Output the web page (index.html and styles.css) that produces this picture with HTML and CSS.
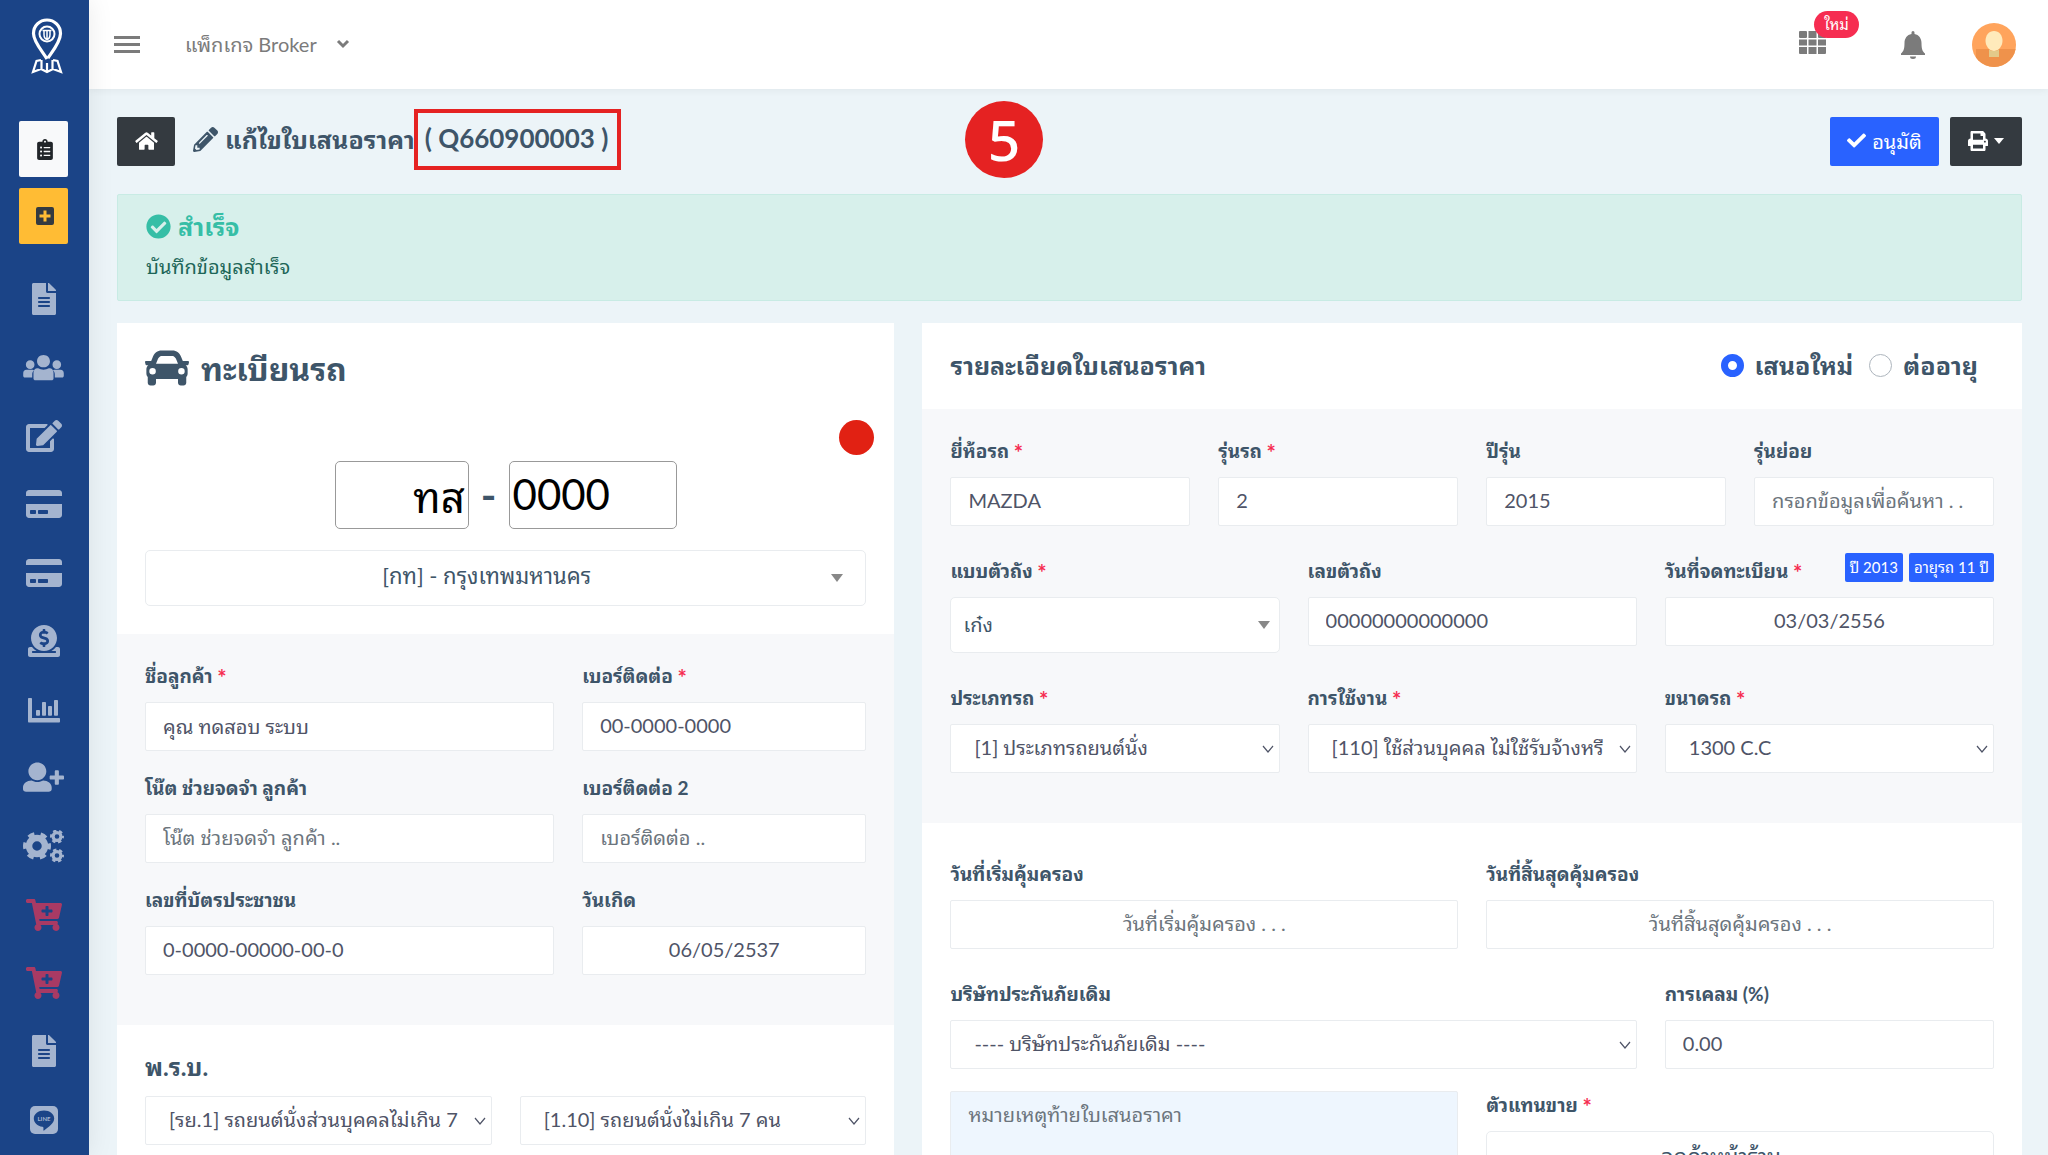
FILE: index.html
```html
<!DOCTYPE html>
<html lang="th">
<head>
<meta charset="utf-8">
<meta name="viewport" content="width=device-width, initial-scale=1">
<title>แก้ไขใบเสนอราคา</title>
<link rel="stylesheet" href="styles.css">
</head>
<body>
<svg class="defs" aria-hidden="true">
  <symbol id="i-file" viewBox="0 0 384 512"><path d="M224 136V0H24C10.7 0 0 10.7 0 24v464c0 13.3 10.7 24 24 24h336c13.3 0 24-10.7 24-24V160H248c-13.2 0-24-10.8-24-24zm64 236c0 6.6-5.4 12-12 12H108c-6.6 0-12-5.4-12-12v-8c0-6.6 5.4-12 12-12h168c6.6 0 12 5.4 12 12v8zm0-64c0 6.6-5.4 12-12 12H108c-6.6 0-12-5.4-12-12v-8c0-6.6 5.4-12 12-12h168c6.6 0 12 5.4 12 12v8zm0-72v8c0 6.6-5.4 12-12 12H108c-6.6 0-12-5.4-12-12v-8c0-6.6 5.4-12 12-12h168c6.6 0 12 5.4 12 12zm96-114.1v6.1H256V0h6.1c6.4 0 12.5 2.5 17 7l97.9 98c4.5 4.5 7 10.6 7 16.9z"/></symbol>
  <symbol id="i-card" viewBox="0 0 576 512"><path d="M0 432c0 26.500 21.500 48 48 48h480c26.500 0 48-21.500 48-48V256H0v176zm192-68c0-6.600 5.400-12 12-12h136c6.600 0 12 5.400 12 12v40c0 6.600-5.400 12-12 12H204c-6.600 0-12-5.400-12-12v-40zm-128 0c0-6.600 5.400-12 12-12h72c6.600 0 12 5.400 12 12v40c0 6.600-5.400 12-12 12H76c-6.600 0-12-5.400-12-12v-40zM576 80v48H0V80c0-26.500 21.500-48 48-48h480c26.500 0 48 21.500 48 48z"/></symbol>
  <symbol id="i-cart" viewBox="0 0 576 512"><path d="M504.717 320H211.572l6.545 32h268.418c15.401 0 26.816 14.301 23.403 29.319l-5.517 24.276C523.112 414.668 536 433.828 536 456c0 31.202-25.519 56.444-56.824 55.994-29.823-.429-54.35-24.631-55.155-54.447-.44-16.287 6.085-31.049 16.803-41.548H231.176C241.553 426.165 248 440.326 248 456c0 31.813-26.528 57.431-58.67 55.938-28.54-1.325-51.751-24.385-53.251-52.917-1.158-22.034 10.436-41.455 28.051-51.586L93.883 64H24C10.745 64 0 53.255 0 40V24C0 10.745 10.745 0 24 0h102.529c11.401 0 21.228 8.021 23.513 19.19L159.208 64H551.99c15.401 0 26.816 14.301 23.403 29.319l-47.273 208C525.637 312.246 515.923 320 504.717 320zM408 168h-48v-40c0-8.837-7.163-16-16-16h-16c-8.837 0-16 7.163-16 16v40h-48c-8.837 0-16 7.163-16 16v16c0 8.837 7.163 16 16 16h48v40c0 8.837 7.163 16 16 16h16c8.837 0 16-7.163 16-16v-40h48c8.837 0 16-7.163 16-16v-16c0-8.837-7.163-16-16-16z"/></symbol>
</svg>

<div class="app">
  <aside class="side">
    <a class="logo" href="#" aria-label="หน้าแรก">
      <svg width="32" height="56" viewBox="0 0 32 56" fill="none" stroke="#fff">
        <path stroke-width="3.200" d="M16 41C12 34 2.500 24 2.500 15.500a13.500 13.500 0 0 1 27 0C29.500 24 21 34 17 40"/>
        <circle cx="16" cy="16" r="7.500" stroke-width="2"/>
        <path stroke-width="1.500" d="M11.500 12.500h9M13 12.500v4q0 4 3 5q3-1 3-5v-4M16 13v8"/>
        <path stroke-width="2.200" d="M10 42l-4.500 1L2 54l8-3 6 3 6-3 8 3-3.500-11-4.500-1M10.500 42v9M21.500 42v9M16 45v9"/>
      </svg>
    </a>
    <div class="quick">
      <button class="quick-btn quick-light" type="button" aria-label="รายการ">
        <svg width="16" height="21" viewBox="0 0 384 512"><path d="M336 64h-80c0-35.300-28.700-64-64-64s-64 28.700-64 64H48C21.500 64 0 85.500 0 112v352c0 26.500 21.500 48 48 48h288c26.500 0 48-21.500 48-48V112c0-26.500-21.500-48-48-48zM96 424c-13.300 0-24-10.700-24-24s10.700-24 24-24 24 10.700 24 24-10.700 24-24 24zm0-96c-13.300 0-24-10.700-24-24s10.700-24 24-24 24 10.700 24 24-10.700 24-24 24zm0-96c-13.300 0-24-10.700-24-24s10.700-24 24-24 24 10.700 24 24-10.700 24-24 24zm96-192c13.300 0 24 10.700 24 24s-10.700 24-24 24-24-10.700-24-24 10.700-24 24-24zm128 368c0 4.400-3.600 8-8 8H168c-4.400 0-8-3.600-8-8v-16c0-4.400 3.600-8 8-8h144c4.400 0 8 3.600 8 8v16zm0-96c0 4.400-3.600 8-8 8H168c-4.400 0-8-3.600-8-8v-16c0-4.400 3.600-8 8-8h144c4.400 0 8 3.600 8 8v16zm0-96c0 4.400-3.600 8-8 8H168c-4.400 0-8-3.600-8-8v-16c0-4.400 3.600-8 8-8h144c4.400 0 8 3.600 8 8v16z"/></svg>
      </button>
      <button class="quick-btn quick-amber" type="button" aria-label="เพิ่ม">
        <svg width="18" height="18" viewBox="0 0 18 18"><path fill-rule="evenodd" d="M2 0h14a2 2 0 0 1 2 2v14a2 2 0 0 1-2 2H2a2 2 0 0 1-2-2V2a2 2 0 0 1 2-2zM7.500 3.500v4h-4v3h4v4h3v-4h4v-3h-4v-4z"/></svg>
      </button>
    </div>
    <nav class="menu">
      <a href="#" aria-label="ใบเสนอราคา"><svg width="24" height="32"><use href="#i-file"/></svg></a>
      <a href="#" aria-label="ลูกค้า"><svg width="41" height="26" viewBox="0 0 640 410"><path d="M110 220c38 0 68-30 68-68s-30-68-68-68-68 30-68 68 30 68 68 68zm420 0c38 0 68-30 68-68s-30-68-68-68-68 30-68 68 30 68 68 68zm-210-25c61.900 0 102-45 102-97S382 0 320 0 218 46 218 98s40 97 102 97zM50 234C20 234 0 258 0 288v42c0 14 12 24 24 24h118v-50c0-26 12-46 30-62-8-5-16-8-24-8zm540 0c30 0 50 24 50 54v42c0 14-12 24-24 24H498v-50c0-26-12-46-30-62 8-5 16-8 24-8zM236 210h-12c-36 0-62 32-62 70v90c0 17 13 30 30 30h256c17 0 30-13 30-30v-90c0-38-26-70-62-70h-12c-24 14-52 22-84 22s-60-8-84-22z"/></svg></a>
      <a href="#" aria-label="แก้ไข"><svg width="36" height="32" viewBox="0 0 576 512"><path d="M402.600 83.200l90.200 90.200c3.800 3.800 3.800 10 0 13.800L274.400 405.600l-92.800 10.300c-12.400 1.400-22.900-9.100-21.500-21.500l10.300-92.800L388.800 83.200c3.800-3.800 10-3.800 13.800 0zm162-22.900l-48.800-48.800c-15.200-15.200-39.900-15.200-55.200 0l-35.400 35.400c-3.800 3.800-3.800 10 0 13.800l90.200 90.200c3.800 3.800 10 3.800 13.800 0l35.400-35.400c15.200-15.300 15.200-40 0-55.200zM384 346.200V448H64V128h229.800c3.200 0 6.200-1.300 8.500-3.500l40-40c7.600-7.600 2.200-20.500-8.500-20.500H48C21.500 64 0 85.500 0 112v352c0 26.500 21.500 48 48 48h352c26.500 0 48-21.500 48-48V306.200c0-10.700-12.900-16-20.500-8.500l-40 40c-2.200 2.300-3.500 5.300-3.500 8.500z"/></svg></a>
      <a href="#" aria-label="ชำระเงิน"><svg width="36" height="32"><use href="#i-card"/></svg></a>
      <a href="#" aria-label="บัตร"><svg width="36" height="32"><use href="#i-card"/></svg></a>
      <a href="#" aria-label="การเงิน"><svg width="32" height="32" viewBox="0 0 512 512"><path d="M256 416c114.900 0 208-93.100 208-208S370.900 0 256 0 48 93.100 48 208s93.100 208 208 208zM233.800 97.400V80.600c0-9.200 7.400-16.600 16.600-16.600h11.100c9.200 0 16.600 7.400 16.600 16.600v17c15.500.8 30.500 6.100 43 15.400 5.600 4.100 6.200 12.300 1.200 17.100L306 145.600c-3.800 3.700-9.500 3.800-14 1-5.400-3.400-11.400-5.100-17.800-5.100h-38.900c-9 0-16.300 8.200-16.300 18.300 0 8.200 5 15.500 12.100 17.600l62.300 18.700c25.700 7.700 43.700 32.400 43.700 60.100 0 34-26.400 61.500-59.100 62.400v16.800c0 9.200-7.400 16.600-16.600 16.600h-11.100c-9.200 0-16.600-7.400-16.600-16.600v-17c-15.500-.8-30.500-6.100-43-15.400-5.600-4.100-6.200-12.300-1.200-17.100l16.300-15.500c3.800-3.700 9.500-3.800 14-1 5.400 3.400 11.400 5.100 17.800 5.100h38.900c9 0 16.300-8.200 16.300-18.300 0-8.200-5-15.500-12.100-17.600l-62.300-18.700c-25.700-7.700-43.700-32.400-43.700-60.100.1-34 26.400-61.500 59.100-62.400zM480 352h-32.500c-19.600 26-44.600 47.700-73 64h63.800c5.300 0 9.600 3.600 9.600 8v16c0 4.400-4.300 8-9.600 8H73.600c-5.300 0-9.600-3.600-9.600-8v-16c0-4.400 4.300-8 9.600-8h63.800c-28.400-16.300-53.300-38-73-64H32c-17.700 0-32 14.300-32 32v96c0 17.700 14.300 32 32 32h448c17.700 0 32-14.300 32-32v-96c0-17.700-14.300-32-32-32z"/></svg></a>
      <a href="#" aria-label="รายงาน"><svg width="32" height="32" viewBox="0 0 512 512"><path d="M332.800 348h38.400c6.400 0 12.800-6.400 12.800-12.800V204.800c0-6.400-6.400-12.800-12.800-12.800h-38.400c-6.400 0-12.800 6.400-12.800 12.800v130.400c0 6.400 6.400 12.800 12.800 12.800zm96 0h38.400c6.400 0 12.800-6.400 12.800-12.800V108.800c0-6.400-6.400-12.800-12.800-12.800h-38.400c-6.400 0-12.800 6.400-12.800 12.800v226.400c0 6.400 6.400 12.800 12.800 12.800zm-288 0h38.400c6.400 0 12.800-6.400 12.800-12.800v-66.400c0-6.400-6.400-12.800-12.800-12.800h-38.400c-6.400 0-12.800 6.400-12.800 12.800v66.400c0 6.400 6.400 12.800 12.800 12.800zm96 0h38.400c6.400 0 12.800-6.400 12.800-12.800V140.800c0-6.400-6.400-12.800-12.800-12.800h-38.400c-6.400 0-12.800 6.400-12.800 12.800v194.400c0 6.400 6.400 12.800 12.800 12.800zM496 384H64V80c0-8.800-7.200-16-16-16H16C7.200 64 0 71.200 0 80v356c0 12 6 20 18 20h478c8.800 0 16-7.200 16-16v-40c0-8.800-7.200-16-16-16z"/></svg></a>
      <a href="#" aria-label="เพิ่มผู้ใช้"><svg width="41" height="33" viewBox="0 0 640 512"><path d="M624 224h-64v-64c0-8.800-7.200-16-16-16h-32c-8.800 0-16 7.200-16 16v64h-64c-8.800 0-16 7.200-16 16v32c0 8.800 7.200 16 16 16h64v64c0 8.800 7.200 16 16 16h32c8.800 0 16-7.200 16-16v-64h64c8.800 0 16-7.200 16-16v-32c0-8.800-7.200-16-16-16zM224 298c78 0 140-57.300 140-138S302 20 224 20 84 80 84 160s62 138 140 138zm89.600 6c-22 14-55 24-89.600 24s-67-10-89.600-24C60 304 0 350 0 412V440c0 20 21.500 38 48 38h352c26.500 0 48-18 48-38v-28c0-62-60-108-134.400-108z"/></svg></a>
      <a href="#" aria-label="ตั้งค่า">
        <svg width="41" height="33" viewBox="0 0 41 33" fill="none" stroke="currentColor">
          <circle cx="14" cy="16" r="8" stroke-width="6.500"/><circle cx="14" cy="16" r="12" stroke-width="4" stroke-dasharray="6.280 6.280" stroke-dashoffset="3"/>
          <circle cx="34" cy="6.500" r="3.900" stroke-width="3.200"/><circle cx="34" cy="6.500" r="5.800" stroke-width="2.400" stroke-dasharray="3.300 2.774" stroke-dashoffset="1.600"/>
          <circle cx="34" cy="25.500" r="3.900" stroke-width="3.200"/><circle cx="34" cy="25.500" r="5.800" stroke-width="2.400" stroke-dasharray="3.300 2.774" stroke-dashoffset="1.600"/>
        </svg>
      </a>
      <a class="hot" href="#" aria-label="สั่งซื้อ"><svg width="36" height="32"><use href="#i-cart"/></svg></a>
      <a class="hot" href="#" aria-label="ตะกร้า"><svg width="36" height="32"><use href="#i-cart"/></svg></a>
      <a href="#" aria-label="เอกสาร"><svg width="24" height="32"><use href="#i-file"/></svg></a>
      <a href="#" aria-label="LINE"><svg width="28" height="28" viewBox="0 0 28 28"><rect width="28" height="28" rx="5"/><path fill="#1b4487" d="M14 4.500c5.600 0 10.200 3.500 10.200 8 0 4.800-6 8.600-9.800 11.700-1 .8-1.200.2-1-.8.200-1.600.1-2.400-1-2.600C7.500 20.200 3.800 16.800 3.800 12.500c0-4.500 4.600-8 10.200-8z"/><text x="14" y="15" text-anchor="middle" font-size="6" font-weight="700" font-family="Lato, sans-serif">LINE</text></svg></a>
    </nav>
  </aside>

  <div class="page">
    <header class="top">
      <button class="burger" type="button" aria-label="เมนู"><span></span><span></span><span></span></button>
      <button class="pack" type="button">แพ็กเกจ Broker
        <svg width="14" height="10" viewBox="0 0 14 10" fill="none" stroke="currentColor" stroke-width="3"><path d="M2 2l5 5 5-5"/></svg>
      </button>
      <div class="top-right">
        <button class="apps" type="button" aria-label="แอป">
          <svg width="27" height="24" viewBox="0 0 27 24"><path d="M1 0h6a1 1 0 0 1 1 1v5a1 1 0 0 1-1 1H1a1 1 0 0 1-1-1V1a1 1 0 0 1 1-1zM9.500 0h8v7h-8zM20 0h6a1 1 0 0 1 1 1v5a1 1 0 0 1-1 1h-6a1 1 0 0 1-1-1V1a1 1 0 0 1 1-1zM0 8.500h8v6H0zM9.500 8.500h8v6h-8zM19 8.500h8v6h-8zM0 16h8v7H1a1 1 0 0 1-1-1zM9.500 16h8v7h-8zM19 16h8v6a1 1 0 0 1-1 1h-7z"/></svg>
          <span class="new">ใหม่</span>
        </button>
        <button class="bell" type="button" aria-label="แจ้งเตือน">
          <svg width="24" height="28" viewBox="0 0 24 28"><path d="M12 0a1.500 1.500 0 0 1 1.500 1.500V3c4.500.8 7 4.500 7 9 0 6 1 8.500 3.500 10.500V24H0v-1.500C2.500 20.500 3.500 18 3.500 12c0-4.500 2.500-8.200 7-9V1.500A1.500 1.500 0 0 1 12 0zM9 25.500h6a3 2.500 0 0 1-6 0z"/></svg>
        </button>
        <a class="avatar" href="#" aria-label="บัญชี">
          <svg width="44" height="44" viewBox="0 0 44 44"><clipPath id="av"><circle cx="22" cy="22" r="22"/></clipPath><g clip-path="url(#av)"><path fill="#ffa45c" d="M0 0h44v44H0z"/><path fill="#ef924b" d="M4 26h40v18H4z"/><path fill="#ffeabb" d="M22 8c5 0 8.500 4 8.500 10 0 5-4 10-8.500 10s-8.500-5-8.500-10C13.500 12 17 8 22 8z"/><path fill="#e3c98a" d="M17 26.500q5 3 10 0V34H17z"/></g></svg>
        </a>
      </div>
    </header>

    <main class="body">
      <div class="head">
        <a class="btn dark home" href="#" aria-label="หน้าแรก"><svg width="23" height="20" viewBox="0 0 576 512"><path d="M280.370 148.260L96 300.110V464a16 16 0 0 0 16 16l112.060-.29a16 16 0 0 0 15.920-16V368a16 16 0 0 1 16-16h64a16 16 0 0 1 16 16v95.640a16 16 0 0 0 16 16.050L464 480a16 16 0 0 0 16-16V300L295.670 148.260a12.190 12.190 0 0 0-15.300 0zM571.600 251.470L488 182.560V44.050a12 12 0 0 0-12-12h-56a12 12 0 0 0-12 12v72.610L318.470 43a48 48 0 0 0-61 0L4.340 251.470a12 12 0 0 0-1.600 16.900l25.500 31A12 12 0 0 0 45.150 301l235.220-193.740a12.190 12.190 0 0 1 15.300 0L530.900 301a12 12 0 0 0 16.900-1.600l25.500-31a12 12 0 0 0-1.700-16.930z"/></svg></a>
        <h1 class="title">
          <svg width="25" height="25" viewBox="0 0 512 512"><path d="M497.900 142.100l-46.100 46.100c-4.700 4.700-12.300 4.700-17 0l-111-111c-4.700-4.700-4.700-12.300 0-17l46.100-46.100c18.700-18.700 49.100-18.700 67.900 0l60.100 60.100c18.800 18.700 18.800 49.100 0 67.900zM284.200 99.800L21.600 362.400.4 483.900c-2.900 16.400 11.400 30.600 27.800 27.800l121.500-21.300 262.600-262.600c4.700-4.700 4.700-12.300 0-17l-111-111c-4.800-4.700-12.400-4.700-17.100 0zM124.100 339.900c-5.500-5.500-5.500-14.300 0-19.800l154-154c5.500-5.500 14.300-5.500 19.800 0s5.500 14.300 0 19.800l-154 154c-5.500 5.500-14.300 5.500-19.800 0zM88 424h48v36.300l-64.500 11.300-31.100-31.100L51.700 376H88v48z"/></svg>
          <span class="title-text">แก้ไขใบเสนอราคา</span><span class="code">( Q660900003 )</span>
        </h1>
        <span class="step">5</span>
        <div class="actions">
          <button class="btn blue" type="button"><svg width="19" height="19" viewBox="0 0 512 512"><path d="M173.898 439.404l-166.400-166.400c-9.997-9.997-9.997-26.206 0-36.204l36.203-36.204c9.997-9.998 26.207-9.998 36.204 0L192 312.690 432.095 72.596c9.997-9.997 26.207-9.997 36.204 0l36.203 36.204c9.997 9.997 9.997 26.206 0 36.204l-294.400 294.401c-9.998 9.997-26.207 9.997-36.204-.001z"/></svg>อนุมัติ</button>
          <button class="btn dark print" type="button" aria-label="พิมพ์"><svg width="20" height="20" viewBox="0 0 512 512"><path d="M448 192V77.250c0-8.490-3.370-16.620-9.370-22.630L393.370 9.370c-6-6-14.140-9.370-22.630-9.370H96C78.330 0 64 14.330 64 32v160c-35.350 0-64 28.650-64 64v112c0 8.840 7.160 16 16 16h48v96c0 17.670 14.330 32 32 32h320c17.670 0 32-14.330 32-32v-96h48c8.840 0 16-7.160 16-16V256c0-35.350-28.650-64-64-64zm-64 256H128v-96h256v96zm0-224H128V64h192v48c0 8.840 7.160 16 16 16h48v96zm48 72c-13.250 0-24-10.750-24-24 0-13.260 10.750-24 24-24s24 10.740 24 24c0 13.250-10.750 24-24 24z"/></svg><svg width="10" height="6" viewBox="0 0 10 6"><path d="M0 0h10L5 6z"/></svg></button>
        </div>
      </div>

      <section class="alert" role="status">
        <h2 class="alert-title"><svg width="25" height="25" viewBox="0 0 512 512"><path d="M504 256c0 136.967-111.033 248-248 248S8 392.967 8 256 119.033 8 256 8s248 111.033 248 248zM227.314 387.314l184-184c6.248-6.248 6.248-16.379 0-22.627l-22.627-22.627c-6.248-6.249-16.379-6.249-22.628 0L216 308.118l-70.059-70.059c-6.248-6.248-16.379-6.248-22.628 0l-22.627 22.627c-6.248 6.248-6.248 16.379 0 22.627l104 104c6.249 6.249 16.379 6.249 22.628.001z"/></svg>สำเร็จ</h2>
        <p class="alert-text">บันทึกข้อมูลสำเร็จ</p>
      </section>

      <form class="cards">
        <section class="card card-l">
          <div class="plate-box">
            <h2 class="car-title"><svg width="44" height="44" viewBox="0 0 512 512"><path fill-rule="evenodd" d="M500 164h-60l-16.500-41.600C406.400 70 365.600 40 319.500 40h-127c-46 0-87 30-104 82.400L72 164H12C4.200 164-1.500 171.300.4 178.900l6 24C7.700 208.300 12.500 212 18 212h20C24.600 223.700 16 240.800 16 260v48c0 16 6 30.700 16 42v66c0 17.700 14.300 32 32 32h32c17.700 0 32-14.300 32-32v-44h256v44c0 17.700 14.300 32 32 32h32c17.700 0 32-14.300 32-32v-66c10-11.300 16-26 16-42v-48c0-19.200-8.600-36.300-22-48h20c5.500 0 10.300-3.700 11.600-9l6-24c2-7.600-3.800-15-11.600-15zM148 146c7-20 25-42 44.500-42h127c19.600 0 37.500 22 44.500 42l20 50H128zM88 244a38 38 0 1 1 0 76 38 38 0 0 1 0-76zm336 0a38 38 0 1 1 0 76 38 38 0 0 1 0-76z"/></svg>ทะเบียนรถ</h2>
            <span class="dot"></span>
            <div class="plate">
              <input class="plate-in plate-a" aria-label="หมวดอักษร" value="ทส">
              <strong>-</strong>
              <input class="plate-in plate-b" aria-label="เลขทะเบียน" value="0000">
            </div>
            <select class="sel2 mid province" aria-label="จังหวัด"><option>[กท] - กรุงเทพมหานคร</option></select>
          </div>
          <div class="shade grid tight">
            <div class="f w7"><label for="nm">ชื่อลูกค้า <i>*</i></label><input id="nm" value="คุณ ทดสอบ ระบบ"></div>
            <div class="f w5"><label for="ph">เบอร์ติดต่อ <i>*</i></label><input id="ph" value="00-0000-0000"></div>
            <div class="f w7"><label for="nt">โน๊ต ช่วยจดจำ ลูกค้า</label><input id="nt" placeholder="โน๊ต ช่วยจดจำ ลูกค้า .."></div>
            <div class="f w5"><label for="ph2">เบอร์ติดต่อ 2</label><input id="ph2" placeholder="เบอร์ติดต่อ .."></div>
            <div class="f w7"><label for="cid">เลขที่บัตรประชาชน</label><input id="cid" value="0-0000-00000-00-0"></div>
            <div class="f w5"><label for="bd">วันเกิด</label><input id="bd" class="mid" value="06/05/2537"></div>
          </div>
          <div class="act">
            <h3>พ.ร.บ.</h3>
            <div class="grid">
              <select class="sel w6" aria-label="ประเภท พ.ร.บ."><option>[รย.1] รถยนต์นั่งส่วนบุคคลไม่เกิน 7</option></select>
              <select class="sel w6" aria-label="รหัส พ.ร.บ."><option>[1.10] รถยนต์นั่งไม่เกิน 7 คน</option></select>
            </div>
          </div>
        </section>

        <section class="card card-r">
          <div class="detail-head">
            <h2>รายละเอียดใบเสนอราคา</h2>
            <div class="radios">
              <label><input type="radio" name="kind" checked>เสนอใหม่</label>
              <label><input type="radio" name="kind">ต่ออายุ</label>
            </div>
          </div>
          <div class="shade grid">
            <div class="f w3"><label for="br">ยี่ห้อรถ <i>*</i></label><input id="br" value="MAZDA"></div>
            <div class="f w3"><label for="md">รุ่นรถ <i>*</i></label><input id="md" value="2"></div>
            <div class="f w3"><label for="yr">ปีรุ่น</label><input id="yr" value="2015"></div>
            <div class="f w3"><label for="sb">รุ่นย่อย</label><input id="sb" placeholder="กรอกข้อมูลเพื่อค้นหา . ."></div>
            <div class="f w4"><label for="bt">แบบตัวถัง <i>*</i></label><select id="bt" class="sel2"><option>เก๋ง</option></select></div>
            <div class="f w4"><label for="vin">เลขตัวถัง</label><input id="vin" value="00000000000000"></div>
            <div class="f w4">
              <div class="lab-row"><label for="rg">วันที่จดทะเบียน <i>*</i></label><span class="tags"><span>ปี 2013</span><span>อายุรถ 11 ปี</span></span></div>
              <input id="rg" class="mid" value="03/03/2556">
            </div>
            <div class="f w4"><label for="tp">ประเภทรถ <i>*</i></label><select id="tp" class="sel"><option>[1] ประเภทรถยนต์นั่ง</option></select></div>
            <div class="f w4"><label for="us">การใช้งาน <i>*</i></label><select id="us" class="sel"><option>[110] ใช้ส่วนบุคคล ไม่ใช้รับจ้างหรือให้เช่า</option></select></div>
            <div class="f w4"><label for="cc">ขนาดรถ <i>*</i></label><select id="cc" class="sel"><option>1300 C.C</option></select></div>
          </div>
          <div class="cover grid">
            <div class="f w6"><label for="st">วันที่เริ่มคุ้มครอง</label><input id="st" class="mid" placeholder="วันที่เริ่มคุ้มครอง . . ."></div>
            <div class="f w6"><label for="en">วันที่สิ้นสุดคุ้มครอง</label><input id="en" class="mid" placeholder="วันที่สิ้นสุดคุ้มครอง . . ."></div>
            <div class="f w8"><label for="co">บริษัทประกันภัยเดิม</label><select id="co" class="sel"><option>---- บริษัทประกันภัยเดิม ----</option></select></div>
            <div class="f w4"><label for="cl">การเคลม (%)</label><input id="cl" value="0.00"></div>
          </div>
          <div class="agent grid">
            <textarea class="w6" rows="4" aria-label="หมายเหตุ" placeholder="หมายเหตุท้ายใบเสนอราคา"></textarea>
            <div class="f w6"><label for="ag">ตัวแทนขาย <i>*</i></label><select id="ag" class="sel2 mid"><option>ลูกค้าหน้าร้าน</option></select></div>
          </div>
        </section>
      </form>
    </main>
  </div>
</div>
</body>
</html>
```
FILE: styles.css
```css
* { box-sizing: border-box; }
body {
  margin: 0;
  height: 100vh;
  overflow: hidden;
  background: #ecf4f8;
  color: #3e5569;
  font: 400 20px/28px Lato, "Noto Sans Thai Looped", "Noto Sans Thai", "Noto Sans", sans-serif;
}
h1, h2, h3, p { margin: 0; font-weight: 700; }
button, input, select, textarea { font: inherit; color: inherit; }
button { border: 0; padding: 0; background: none; cursor: pointer; }
svg { fill: currentColor; flex: none; display: block; }
svg[fill="none"] { fill: none; }
.defs { position: absolute; width: 0; height: 0; }

.app { display: flex; height: 100vh; }

/* sidebar */
.side {
  width: 89px;
  flex: none;
  display: flex;
  flex-direction: column;
  background: #1b4487;
  box-shadow: 1px 0 24px rgba(0, 0, 0, .08);
  z-index: 1;
}
.logo { height: 89px; flex: none; padding: 18px 0 0 31px; }
.quick { display: flex; flex-direction: column; gap: 11px; padding: 32px 0 21px 19px; }
.quick-btn {
  width: 49px;
  height: 56px;
  display: flex;
  align-items: center;
  justify-content: center;
  padding-left: 2px;
  border-radius: 2px;
  color: #212529;
}
.quick-light { background: #f8f9fa; }
.quick-amber { background: #ffbc34; color: #343a40; }
.menu { flex: 1; display: flex; flex-direction: column; padding: 0 2px 1px 0; }
.menu a {
  flex: 1;
  display: flex;
  align-items: center;
  justify-content: center;
  color: #a4b4cf;
}
.menu a.hot { color: #a93a64; }

/* top bar */
.page { flex: 1; min-width: 0; display: flex; flex-direction: column; }
.top {
  height: 89px;
  flex: none;
  display: flex;
  align-items: center;
  padding: 0 32px 0 25px;
  background: #fff;
  color: #7b7b7b;
  box-shadow: 0 1px 8px rgba(0, 0, 0, .06);
}
.burger { display: flex; flex-direction: column; gap: 4px; width: 26px; }
.burger span { height: 3px; background: currentColor; }
.pack { display: flex; align-items: center; gap: 19px; margin-left: 45px; padding-bottom: 2px; }
.top-right { display: flex; align-items: center; margin-left: auto; }
.apps { position: relative; margin-right: 75px; padding-bottom: 3px; }
.bell { margin-right: 47px; }
.new {
  position: absolute;
  left: 15px;
  top: -20px;
  width: 45px;
  height: 27px;
  border-radius: 14px;
  background: #f62d51;
  color: #fff;
  font-size: 15px;
  line-height: 27px;
}

/* page body */
.body { flex: 1; min-height: 0; overflow: hidden; padding: 28px 26px 0 28px; }
.head { position: relative; display: flex; align-items: center; height: 49px; }
.btn {
  display: flex;
  align-items: center;
  justify-content: center;
  gap: 6px;
  height: 49px;
  padding-bottom: 2px;
  border-radius: 2px;
  color: #fff;
}
.dark { background: #343a40; }
.blue { background: #2962ff; width: 109px; }
.home { width: 58px; }
.print { width: 72px; }
.actions { display: flex; gap: 11px; margin-left: auto; }
.title { display: flex; align-items: center; margin-left: 18px; padding-bottom: 4px; font-size: 25px; line-height: 36px; }
.title-text { width: 189px; margin-left: 7px; padding-bottom: 2px; white-space: nowrap; }
.code {
  width: 207px;
  height: 61px;
  padding: 0 2px 3px 0;
  border: 4px solid #e52222;
  display: flex;
  align-items: center;
  justify-content: center;
  font-size: 26px;
  white-space: nowrap;
}
.step {
  position: absolute;
  left: 848px;
  top: -16px;
  width: 78px;
  height: 77px;
  border-radius: 50%;
  background: #e52222;
  color: #fff;
  font: 500 57px/76px "Noto Sans", sans-serif;
  text-align: center;
}
.alert {
  margin-top: 28px;
  height: 107px;
  padding: 11px 28px;
  background: #d7f0eb;
  border: 1px solid #c8ebe4;
  border-radius: 2px;
  color: #1d6658;
}
.alert-title { display: flex; align-items: center; gap: 7px; font-size: 25px; line-height: 40px; color: #36bea6; }
.alert-text { font-weight: 400; line-height: 40px; }

.cards, .grid { display: grid; grid-template-columns: repeat(12, 1fr); column-gap: 28px; align-items: start; }
.cards { margin-top: 22px; }
.card { background: #fff; }
.card-l { grid-column: span 5; }
.card-r { grid-column: span 7; }
.w3 { grid-column: span 3; }
.w4 { grid-column: span 4; }
.w5 { grid-column: span 5; }
.w6 { grid-column: span 6; }
.w7 { grid-column: span 7; }
.w8 { grid-column: span 8; }
.shade { background: #f7f8fa; padding: 24px 28px 50px; row-gap: 27px; }
.tight { row-gap: 19px; }

/* fields */
.f { display: flex; flex-direction: column; min-width: 0; }
.f label { height: 36px; margin-bottom: 8px; line-height: 36px; font-weight: 700; white-space: nowrap; font-size: 19px; }
.f i { color: #f62d51; font-size: 22px; line-height: 20px; font-style: normal; vertical-align: -3px; }
.lab-row { display: flex; justify-content: space-between; }
.tags { display: flex; gap: 6px; }
.tags span {
  height: 29px;
  padding: 0 5px;
  border-radius: 2px;
  background: #2962ff;
  color: #fff;
  font-size: 15px;
  line-height: 29px;
  white-space: nowrap;
}
.f input, .sel, .sel2, textarea {
  width: 100%;
  height: 49px;
  padding: 0 17px 3px;
  border: 1px solid #e9ecef;
  border-radius: 2px;
  background-color: #fff;
  color: #4f5467;
}
.f .mid, .mid { text-align: center; text-align-last: center; }
::placeholder { color: #6c757d; opacity: 1; }
.sel, .sel2 { appearance: none; background-repeat: no-repeat; }
.sel {
  padding: 0 32px 4px 23px;
  background-image: url("data:image/svg+xml,%3Csvg xmlns='http://www.w3.org/2000/svg' width='12' height='8' fill='none' stroke='%234f5467' stroke-width='1.2'%3E%3Cpath d='M1 1l5 6 5-6'/%3E%3C/svg%3E");
  background-position: right 5px center;
}
.sel2, .f .sel2 {
  height: 56px;
  padding: 0 40px 3px 12px;
  border-radius: 5px;
  color: #3e5569;
  background-image: url("data:image/svg+xml,%3Csvg xmlns='http://www.w3.org/2000/svg' width='12' height='8' fill='%23888'%3E%3Cpath d='M0 0h12L6 8z'/%3E%3C/svg%3E");
  background-position: right 9px center;
}
.sel2.mid, .f .sel2.mid { padding: 0 50px 4px 12px; background-position: right 22px center; font-size: 22px; }
textarea {
  display: block;
  height: 160px;
  margin-top: 4px;
  padding: 8px 17px;
  background: #eef6fe;
  resize: none;
}
.f input, .sel, .sel2 { line-height: 28px; }

/* left card */
.plate-box { position: relative; padding: 24px 28px 28px; }
.car-title { display: flex; align-items: center; gap: 12px; height: 44px; font-size: 32px; line-height: 44px; }
.dot {
  position: absolute;
  right: 20px;
  top: 97px;
  width: 35px;
  height: 35px;
  border-radius: 50%;
  background: #e12113;
}
.plate {
  display: flex;
  align-items: center;
  justify-content: center;
  gap: 12px;
  margin: 70px 0 21px;
  font-size: 42px;
  line-height: 48px;
}
.plate-in {
  height: 68px;
  padding: 0 3px 3px;
  border: 1px solid #999;
  border-radius: 5px;
  background: #fff;
  color: #000;
}
.plate-a { width: 134px; text-align: right; }
.plate-b { width: 168px; }
.act { padding: 22px 28px 28px; }
.act h3 { font-size: 24px; line-height: 40px; margin-bottom: 9px; }

/* right card */
.detail-head { display: flex; align-items: center; justify-content: space-between; height: 86px; padding: 0 44px 2px 28px; }
.detail-head h2, .radios { font-size: 25px; line-height: 36px; font-weight: 700; }
.radios { display: flex; gap: 16px; }
.radios label { display: flex; align-items: center; gap: 11px; }
.radios input {
  appearance: none;
  width: 23px;
  height: 23px;
  margin: 0;
  border: 1px solid #adb5bd;
  border-radius: 50%;
  background: #fff;
}
.radios input:checked { border: 7px solid #2962ff; }
.cover { padding: 33px 28px 18px; row-gap: 27px; }
.agent { padding: 0 28px 28px; }
```
